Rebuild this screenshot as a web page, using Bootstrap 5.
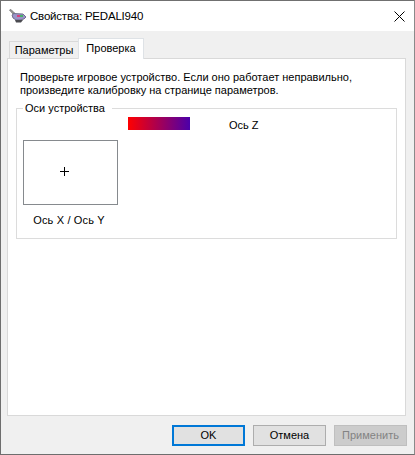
<!DOCTYPE html>
<html lang="ru">
<head>
    <meta charset="UTF-8">
    <meta name="viewport" content="width=device-width, initial-scale=1.0">
    <title>Свойства: PEDALI940</title>
    <link href="https://cdn.jsdelivr.net/npm/bootstrap@5.3.2/dist/css/bootstrap.min.css" rel="stylesheet">
    <style>
        html, body { height: 100%; }
        body { background: #f0f0f0; font-family: "Liberation Sans", Arial, sans-serif; font-size: 11px; line-height: 15px; color: #000; overflow: hidden; }
        .dlg-window { width: 415px; height: 455px; border: 1px solid #6e6e6e; border-right-color: #8a8a8a; border-top-color: #707070; }
        .dlg-title { height: 30px; background: #fff; padding-left: 8px; padding-right: 9px; }
        .dlg-title-text { margin-left: 4px; font-size: 11.5px; letter-spacing: -0.2px; }
        .dlg-tabs { margin: 6px 8px 0 6px; height: 21px; border: 0; align-items: flex-end; padding-left: 2px; }
        .dlg-tabs .nav-link { font-size: 11px; color: #000; border-radius: 0; padding: 0; text-align: center; background: #f0f0f0; border: 1px solid #d9d9d9; border-bottom: 0; margin: 0; }
        .dlg-tabs .tab-back { width: 69px; height: 17px; border-right: 0; margin-bottom: 0; line-height: 17px; }
        .dlg-tabs .nav-link.active { width: 66px; height: 21px; background: #fff; line-height: 19px; position: relative; z-index: 1; margin-bottom: -1px; }
        .dlg-panel { margin: 0 8px 0 6px; height: 358px; background: #fff; border: 1px solid #d9d9d9; padding: 12px 8px 0 8px; }
        .dlg-intro { margin: 0 0 4px 4px; line-height: 13px; white-space: nowrap; }
        .axes-group { border: 1px solid #dcdcdc; height: 138px; margin: 0; padding: 0 6px; min-width: 0; }
        .axes-group legend { float: none; width: auto; font-size: 11px; line-height: 15px; margin: 0; padding: 0 7px 0 2px; }
        .z-row { margin-top: 1px; height: 16px; }
        .z-bar { width: 62px; height: 13px; margin-left: 105px; background: linear-gradient(to right, #ff0000, #4b00aa); }
        .z-label { margin-left: 39px; margin-top: 1px; }
        .xy-box { width: 95px; height: 65px; margin-top: 7px; padding: 0 12px 2px 0; border: 1px solid #868a8e; font-size: 0; }
        .xy-caption { width: 95px; margin-top: 8px; padding-right: 3px; text-align: center; letter-spacing: 0.15px; }
        .dlg-foot { height: 38px; padding-right: 7px; padding-top: 9px; gap: 8px; }
        .dlg-btn { width: 73px; height: 21px; padding: 0; font-size: 11px; line-height: 17px; border-radius: 0; background: #e1e1e1; border: 1px solid #adadad; color: #000; }
        .dlg-btn.btn-default { border: 2px solid #0078d7; line-height: 15px; }
        .dlg-btn:disabled { background: #cccccc; border-color: #bfbfbf; color: #838383; opacity: 1; }
    </style>
</head>
<body>
    <div class="dlg-window d-flex flex-column">
        <div class="dlg-title d-flex align-items-center">
            <svg width="17" height="14" viewBox="0 0 17 14">
                <path d="M0.5 1 L2 0.5 L5.5 4 L4 5 Z" fill="#9a9a9a" stroke="#6a6a6a" stroke-width="0.7"/>
                <path d="M3 6 L5 4.5 L14 5 L17 8 L15 10 L11 11 L7 11 L4 9 Z" fill="#9a94c8" stroke="#5a5a78" stroke-width="0.8"/>
                <rect x="8" y="6" width="3" height="2" fill="#d8407a"/>
                <rect x="11" y="6" width="3" height="2" fill="#49b16a"/>
                <path d="M6 11 H14 L12 13.5 H7 Z" fill="#4a4a50"/>
            </svg>
            <span class="dlg-title-text">Свойства: PEDALI940</span>
            <svg class="ms-auto" width="11" height="11" viewBox="0 0 11 11">
                <path d="M0.5 0.5 L10.5 10.5 M10.5 0.5 L0.5 10.5" stroke="#000" stroke-width="1" fill="none"/>
            </svg>
        </div>
        <ul class="nav nav-tabs dlg-tabs">
            <li class="nav-item"><a class="nav-link tab-back" href="#">Параметры</a></li>
            <li class="nav-item"><a class="nav-link active" href="#">Проверка</a></li>
        </ul>
        <div class="dlg-panel">
            <p class="dlg-intro">Проверьте игровое устройство. Если оно работает неправильно,<br>произведите калибровку на странице параметров.</p>
            <fieldset class="axes-group">
                <legend>Оси устройства</legend>
                <div class="z-row d-flex align-items-start">
                    <div class="z-bar"></div>
                    <div class="z-label">Ось Z</div>
                </div>
                <div class="xy-box d-flex align-items-center justify-content-center">
                    <svg width="9" height="9" viewBox="0 0 9 9"><path d="M4.5 0 V9 M0 4.5 H9" stroke="#000" stroke-width="1"/></svg>
                </div>
                <div class="xy-caption">Ось X / Ось Y</div>
            </fieldset>
        </div>
        <div class="dlg-foot d-flex justify-content-end">
            <button type="button" class="btn dlg-btn btn-default">OK</button>
            <button type="button" class="btn dlg-btn">Отмена</button>
            <button type="button" class="btn dlg-btn" disabled>Применить</button>
        </div>
    </div>
    <script src="https://cdn.jsdelivr.net/npm/bootstrap@5.3.2/dist/js/bootstrap.bundle.min.js"></script>
</body>
</html>
